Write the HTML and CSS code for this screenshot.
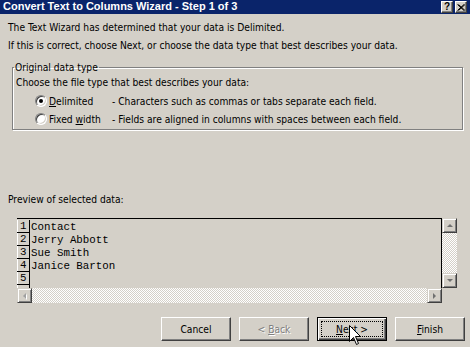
FILE: index.html
```html
<!DOCTYPE html>
<html lang="en">
<head>
  <meta charset="UTF-8" />
  <title>Convert Text to Columns Wizard - Step 1 of 3</title>
  <link rel="stylesheet" href="styles.css">
</head>
<body>

  <div class="dialog">
    <div class="titlebar">
      <span class="title">Convert Text to Columns Wizard - Step 1 of 3</span>
      <span class="title-buttons">
        <span class="tbtn">?</span>
        <span class="tbtn">
          <svg width="8" height="7" viewBox="0 0 8 7"><path d="M0.5 0.5 L7 6.5 M1.5 0.5 L8 6.5 M7 0.5 L0.5 6.5 M8 0.5 L1.5 6.5" stroke="#000" stroke-width="1" /></svg>
        </span>
      </span>
    </div>

    <div class="content">
      <p class="line">The Text Wizard has determined that your data is Delimited.</p>
      <p class="line">If this is correct, choose Next, or choose the data type that best describes your data.</p>

      <fieldset class="group">
        <legend>Original data type</legend>
        <p class="line">Choose the file type that best describes your data:</p>
        <div class="option">
          <span class="radio checked"></span>
          <span class="opt-label"><u>D</u>elimited</span>
          <span class="opt-desc">- Characters such as commas or tabs separate each field.</span>
        </div>
        <div class="option">
          <span class="radio"></span>
          <span class="opt-label">Fixed <u>w</u>idth</span>
          <span class="opt-desc">- Fields are aligned in columns with spaces between each field.</span>
        </div>
      </fieldset>

      <p class="line preview-label">Preview of selected data:</p>

      <div class="preview">
        <div class="preview-main">
          <div class="rows">
            <div class="row"><span class="num">1</span><span class="cell">Contact</span></div>
            <div class="row"><span class="num">2</span><span class="cell">Jerry Abbott</span></div>
            <div class="row"><span class="num">3</span><span class="cell">Sue Smith</span></div>
            <div class="row"><span class="num">4</span><span class="cell">Janice Barton</span></div>
            <div class="row"><span class="num">5</span><span class="cell"></span></div>
            <div class="row"><span class="num"></span><span class="cell"></span></div>
          </div>
          <div class="vscroll">
            <span class="sbtn"><span class="arrow up"></span></span>
            <span class="track"></span>
            <span class="sbtn"><span class="arrow down"></span></span>
          </div>
        </div>
        <div class="hscroll">
          <span class="sbtn"><span class="arrow left"></span></span>
          <span class="track"></span>
          <span class="sbtn"><span class="arrow right"></span></span>
        </div>
      </div>
    </div>

    <div class="buttons">
      <button class="btn">Cancel</button>
      <button class="btn disabled">&lt; <u>B</u>ack</button>
      <button class="btn default"><span class="focus"><u>N</u>ext &gt;</span></button>
      <button class="btn"><u>F</u>inish</button>
    </div>

    <svg class="cursor" width="13" height="21" viewBox="0 0 13 21">
      <path d="M0.5 0.5 L0.5 16.5 L4.5 12.5 L7.5 19.5 L9.5 18.5 L6.5 11.5 L11.5 11.5 Z" fill="#fff" stroke="#000" stroke-width="1" />
    </svg>
  </div>

</body>
</html>
```

FILE: styles.css
```css
html, body {
  margin: 0;
  padding: 0;
}

body {
  background: #d4d0c8;
  font-family: 'DejaVu Sans Condensed', 'Liberation Sans', Arial, sans-serif;
  font-size: 10.2px;
  color: #000;
}

.dialog {
  position: relative;
  width: 470px;
  height: 347px;
  overflow: hidden;
}

.titlebar {
  height: 14px;
  background: #0a246a;
  color: #fff;
  display: flex;
  justify-content: space-between;
  align-items: flex-start;
  padding: 0 3px 0 3px;
}

.title {
  font-family: 'Liberation Sans', Arial, sans-serif;
  font-weight: bold;
  font-size: 11px;
  line-height: 13px;
}

.title-buttons {
  display: flex;
  gap: 2px;
  padding-top: 1px;
}

.tbtn {
  width: 12px;
  height: 12px;
  box-sizing: border-box;
  background: #d4d0c8;
  color: #000;
  border: 1px solid;
  border-color: #fff #404040 #404040 #fff;
  box-shadow: inset -1px -1px #808080;
  font-family: 'Liberation Sans', Arial, sans-serif;
  font-weight: bold;
  font-size: 10px;
  line-height: 10px;
  display: flex;
  align-items: center;
  justify-content: center;
}

.content {
  padding: 5px 7px 0 8px;
}

.line {
  margin: 0;
  line-height: 18px;
  white-space: nowrap;
}

.group {
  margin: 6px 0 0 4px;
  padding: 0 0 1px 3px;
  border: 1px solid #808080;
  box-shadow: inset 1px 1px #fff, 1px 1px #fff;
  min-width: 0;
}

.group legend {
  padding: 0 1px;
  margin-left: -2px;
  line-height: 13px;
}

.option {
  display: flex;
  align-items: center;
  height: 18px;
  padding-left: 19px;
  white-space: nowrap;
}

.radio {
  width: 12px;
  height: 12px;
  box-sizing: border-box;
  border-radius: 50%;
  background: #fff;
  border: 1px solid;
  border-color: #808080 #fff #fff #808080;
  box-shadow: inset 1px 1px #404040, inset -1px -1px #d4d0c8;
  margin-right: 2px;
  position: relative;
}

.radio.checked::after {
  content: '';
  position: absolute;
  left: 3px;
  top: 3px;
  width: 4px;
  height: 4px;
  border-radius: 50%;
  background: #000;
}

.opt-label {
  width: 63px;
}

.preview-label {
  margin-top: 61px;
}

.preview {
  margin: 9px 0 0 9px;
  width: 440px;
}

.preview-main {
  display: flex;
  height: 70px;
}

.rows {
  flex: 1;
  border-top: 1px solid #000;
  border-right: 1px solid #000;
  padding-top: 1px;
  overflow: hidden;
  font-family: 'Liberation Mono', 'Courier New', monospace;
  font-size: 10.8px;
}

.row {
  display: flex;
  height: 13px;
  line-height: 14px;
}

.num {
  width: 13px;
  box-sizing: border-box;
  border-right: 1px solid #000;
  border-bottom: 1px solid #000;
  box-shadow: inset 1px 0 #fff;
  padding-left: 3px;
  line-height: 13px;
}

.cell {
  padding-left: 1px;
  white-space: pre;
}

.vscroll {
  width: 15px;
  display: flex;
  flex-direction: column;
}

.hscroll {
  width: 425px;
  height: 15px;
  display: flex;
}

.track {
  flex: 1;
  background: repeating-conic-gradient(#fff 0 25%, #d4d0c8 0 50%) 0 0 / 2px 2px;
}

.sbtn {
  width: 15px;
  height: 15px;
  box-sizing: border-box;
  background: #d4d0c8;
  border: 1px solid;
  border-color: #d4d0c8 #404040 #404040 #d4d0c8;
  box-shadow: inset 1px 1px #fff, inset -1px -1px #808080;
  display: flex;
  align-items: center;
  justify-content: center;
  flex: none;
}

.arrow {
  width: 0;
  height: 0;
  border: 3px solid transparent;
}

.arrow.up {
  border-bottom: 3px solid #707070;
  border-top-width: 0;
  margin-top: -1px;
}

.arrow.down {
  border-top: 3px solid #707070;
  border-bottom-width: 0;
}

.arrow.right {
  border-left: 3px solid #707070;
  border-right-width: 0;
}

.arrow.left {
  border-right: 3px solid #a0a0a0;
  border-left-width: 0;
  filter: drop-shadow(1px 1px 0 #fff);
}

.buttons {
  display: flex;
  justify-content: flex-end;
  gap: 8px;
  padding-right: 5px;
  margin-top: 14px;
}

.btn {
  width: 70px;
  height: 24px;
  box-sizing: border-box;
  padding: 0;
  font-family: 'DejaVu Sans Condensed', 'Liberation Sans', Arial, sans-serif;
  font-size: 10.2px;
  color: #000;
  background: #d4d0c8;
  border: 1px solid;
  border-color: #fff #404040 #404040 #fff;
  box-shadow: inset -1px -1px #808080;
}

.btn.disabled {
  color: #808080;
  text-shadow: 1px 1px #fff;
}

.btn.default {
  border: 1px solid #000;
  box-shadow: inset 1px 1px #fff, inset -1px -1px #404040, inset -2px -2px #808080;
  padding: 3px;
}

.focus {
  display: flex;
  align-items: center;
  justify-content: center;
  height: 100%;
  border: 1px dotted #000;
  box-sizing: border-box;
}

.cursor {
  position: absolute;
  left: 349px;
  top: 325px;
}
```
